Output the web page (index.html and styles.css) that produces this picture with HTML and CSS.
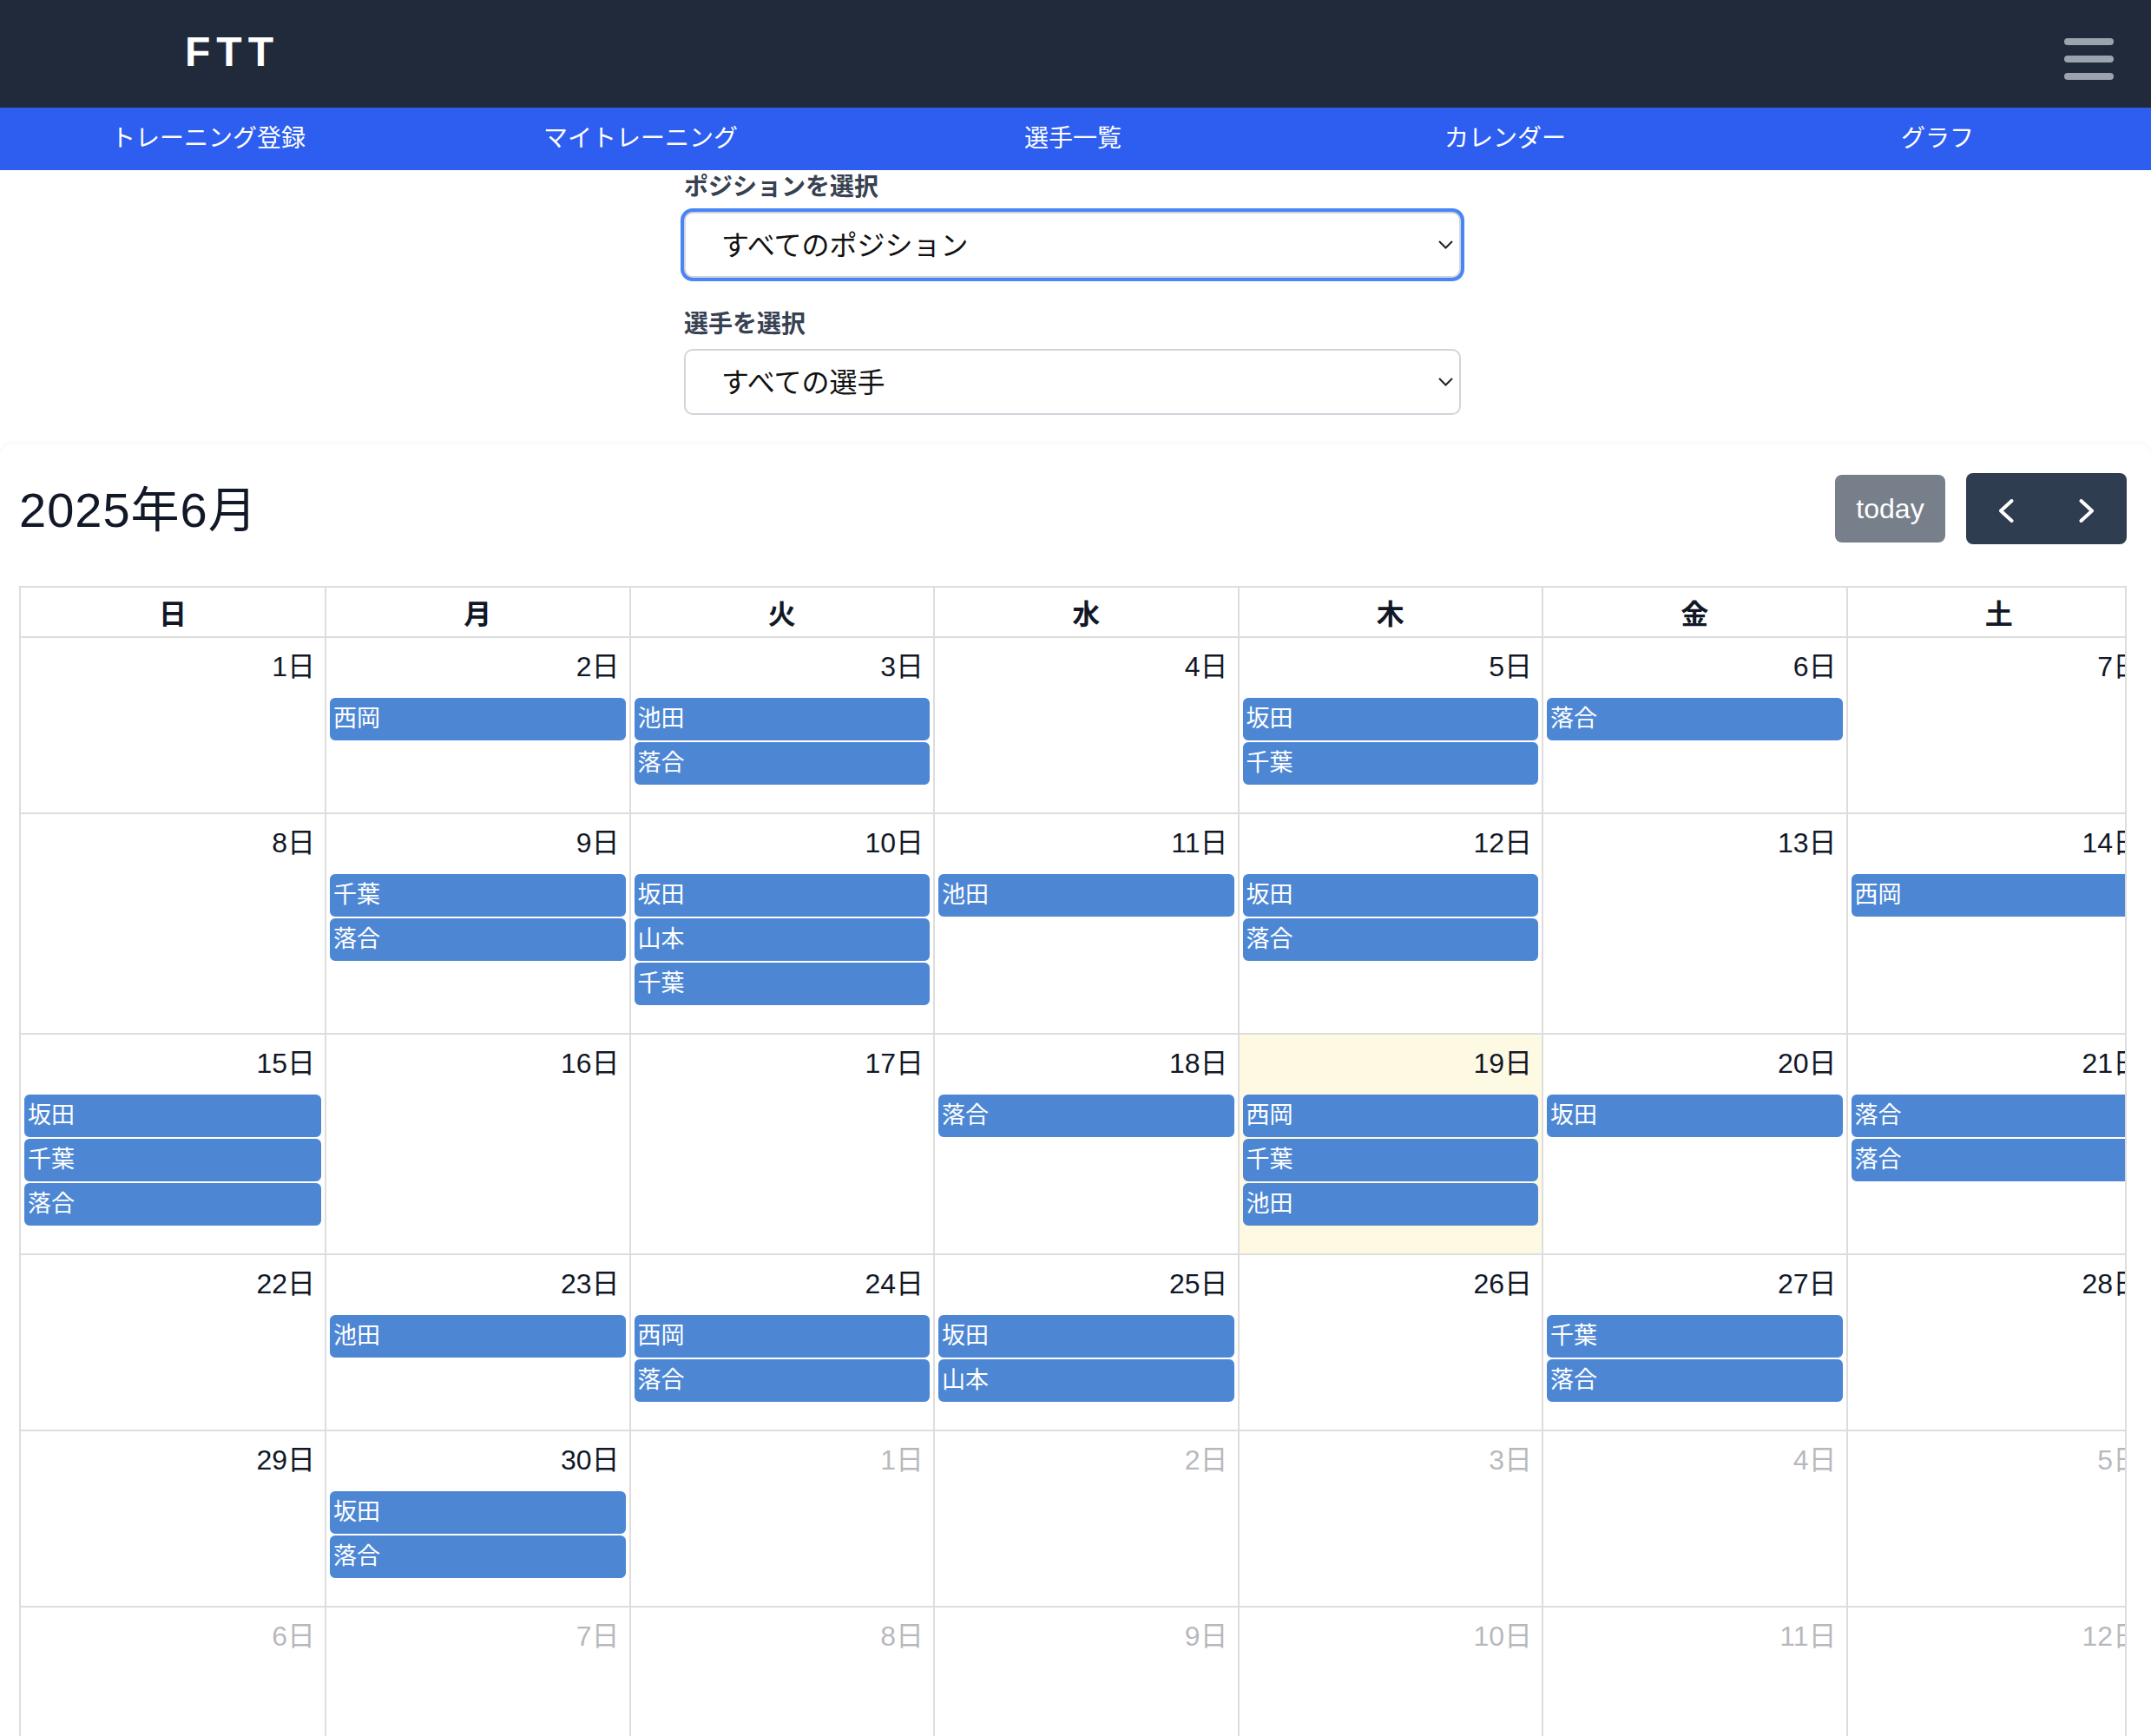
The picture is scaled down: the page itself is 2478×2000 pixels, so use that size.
FILE: index.html
```html
<!DOCTYPE html>
<html lang="ja">
<head>
<meta charset="utf-8">
<title>FTT カレンダー</title>
<link rel="stylesheet" href="styles.css">
</head>
<body>
<header class="topbar">
  <div class="logo">FTT</div>
  <button class="burger" aria-label="メニュー"><span></span><span></span><span></span></button>
</header>
<nav class="mainnav">
  <a class="navlink">トレーニング登録</a>
  <a class="navlink">マイトレーニング</a>
  <a class="navlink">選手一覧</a>
  <a class="navlink">カレンダー</a>
  <a class="navlink">グラフ</a>
</nav>

<section class="filters">
  <label class="flabel">ポジションを選択</label>
  <div class="selwrap focused">
    <select class="sel"><option>すべてのポジション</option></select>
    <svg class="chev" viewBox="0 0 17 10"><polyline points="1,1 8.5,8.5 16,1"/></svg>
  </div>
  <label class="flabel">選手を選択</label>
  <div class="selwrap">
    <select class="sel"><option>すべての選手</option></select>
    <svg class="chev" viewBox="0 0 17 10"><polyline points="1,1 8.5,8.5 16,1"/></svg>
  </div>
</section>

<section class="calcard">
  <div class="toolbar">
    <h2 class="title">2025年6月</h2>
    <div class="btns">
      <button class="btn today">today</button>
      <div class="btngroup">
        <button class="btn navbtn" aria-label="prev"><svg class="arrow" viewBox="0 0 17 27"><polyline points="14.5,2 2,13.5 14.5,25"/></svg></button>
        <button class="btn navbtn" aria-label="next"><svg class="arrow" viewBox="0 0 17 27"><polyline points="2.5,2 15,13.5 2.5,25"/></svg></button>
      </div>
    </div>
  </div>

  <div class="grid">
    <div class="row">
      <div class="hcell">日</div><div class="hcell">月</div><div class="hcell">火</div><div class="hcell">水</div><div class="hcell">木</div><div class="hcell">金</div><div class="hcell">土</div>
    </div>

    <div class="row">
      <div class="day"><div class="num">1日</div></div>
      <div class="day"><div class="num">2日</div><div class="events"><div class="ev">西岡</div></div></div>
      <div class="day"><div class="num">3日</div><div class="events"><div class="ev">池田</div><div class="ev">落合</div></div></div>
      <div class="day"><div class="num">4日</div></div>
      <div class="day"><div class="num">5日</div><div class="events"><div class="ev">坂田</div><div class="ev">千葉</div></div></div>
      <div class="day"><div class="num">6日</div><div class="events"><div class="ev">落合</div></div></div>
      <div class="day"><div class="num">7日</div></div>
    </div>

    <div class="row">
      <div class="day"><div class="num">8日</div></div>
      <div class="day"><div class="num">9日</div><div class="events"><div class="ev">千葉</div><div class="ev">落合</div></div></div>
      <div class="day"><div class="num">10日</div><div class="events"><div class="ev">坂田</div><div class="ev">山本</div><div class="ev">千葉</div></div></div>
      <div class="day"><div class="num">11日</div><div class="events"><div class="ev">池田</div></div></div>
      <div class="day"><div class="num">12日</div><div class="events"><div class="ev">坂田</div><div class="ev">落合</div></div></div>
      <div class="day"><div class="num">13日</div></div>
      <div class="day"><div class="num">14日</div><div class="events"><div class="ev">西岡</div></div></div>
    </div>

    <div class="row">
      <div class="day"><div class="num">15日</div><div class="events"><div class="ev">坂田</div><div class="ev">千葉</div><div class="ev">落合</div></div></div>
      <div class="day"><div class="num">16日</div></div>
      <div class="day"><div class="num">17日</div></div>
      <div class="day"><div class="num">18日</div><div class="events"><div class="ev">落合</div></div></div>
      <div class="day today-cell"><div class="num">19日</div><div class="events"><div class="ev">西岡</div><div class="ev">千葉</div><div class="ev">池田</div></div></div>
      <div class="day"><div class="num">20日</div><div class="events"><div class="ev">坂田</div></div></div>
      <div class="day"><div class="num">21日</div><div class="events"><div class="ev">落合</div><div class="ev">落合</div></div></div>
    </div>

    <div class="row">
      <div class="day"><div class="num">22日</div></div>
      <div class="day"><div class="num">23日</div><div class="events"><div class="ev">池田</div></div></div>
      <div class="day"><div class="num">24日</div><div class="events"><div class="ev">西岡</div><div class="ev">落合</div></div></div>
      <div class="day"><div class="num">25日</div><div class="events"><div class="ev">坂田</div><div class="ev">山本</div></div></div>
      <div class="day"><div class="num">26日</div></div>
      <div class="day"><div class="num">27日</div><div class="events"><div class="ev">千葉</div><div class="ev">落合</div></div></div>
      <div class="day"><div class="num">28日</div></div>
    </div>

    <div class="row">
      <div class="day"><div class="num">29日</div></div>
      <div class="day"><div class="num">30日</div><div class="events"><div class="ev">坂田</div><div class="ev">落合</div></div></div>
      <div class="day other"><div class="num">1日</div></div>
      <div class="day other"><div class="num">2日</div></div>
      <div class="day other"><div class="num">3日</div></div>
      <div class="day other"><div class="num">4日</div></div>
      <div class="day other"><div class="num">5日</div></div>
    </div>

    <div class="row">
      <div class="day other"><div class="num">6日</div></div>
      <div class="day other"><div class="num">7日</div></div>
      <div class="day other"><div class="num">8日</div></div>
      <div class="day other"><div class="num">9日</div></div>
      <div class="day other"><div class="num">10日</div></div>
      <div class="day other"><div class="num">11日</div></div>
      <div class="day other"><div class="num">12日</div></div>
    </div>
  </div>
</section>
</body>
</html>
```

FILE: styles.css
```css
* {
  box-sizing: border-box;
  margin: 0;
  padding: 0;
}

html, body {
  background: #ffffff;
}

body {
  width: 2478px;
  overflow: hidden;
  font-family: "Liberation Sans", "Noto Sans CJK JP", sans-serif;
  color: #111827;
}

/* ---------- top bar ---------- */
.topbar {
  height: 124px;
  background: #202a3a;
  display: flex;
  align-items: flex-start;
  justify-content: space-between;
  padding: 0 43px 0 213px;
}

.logo {
  margin-top: 32px;
  color: #ffffff;
  font-weight: 700;
  font-size: 48px;
  line-height: 56px;
  letter-spacing: 7px;
}

.burger {
  margin-top: 44px;
  width: 57px;
  display: flex;
  flex-direction: column;
  gap: 12px;
  background: none;
  border: 0;
}

.burger span {
  display: block;
  height: 8px;
  border-radius: 4px;
  background: #9ca3af;
}

/* ---------- main nav ---------- */
.mainnav {
  height: 72px;
  background: #2d5ef0;
  display: flex;
  margin: 0 -3px 0 -9px;
}

.navlink {
  flex: 1;
  text-align: center;
  color: #ffffff;
  font-size: 28px;
  line-height: 72px;
}

/* ---------- filters ---------- */
.filters {
  width: 895px;
  margin-left: 788px;
  padding-bottom: 34px;
}

.flabel {
  display: block;
  font-size: 28px;
  line-height: 40px;
  font-weight: 700;
  color: #374151;
  margin-bottom: 8px;
}

.selwrap {
  position: relative;
  height: 76px;
  border: 2px solid #d1d5db;
  border-radius: 10px;
  background: #ffffff;
}

.selwrap + .flabel {
  margin-top: 34px;
}

.selwrap.focused {
  box-shadow: 0 0 0 4px #4a85f6;
}

.sel {
  -webkit-appearance: none;
  appearance: none;
  width: 100%;
  height: 100%;
  border: 0;
  outline: none;
  background: transparent;
  font-family: "Liberation Sans", "Noto Sans CJK JP", sans-serif;
  font-size: 32px;
  color: #111111;
  padding-left: 41px;
  padding-top: 2px;
}

.chev {
  position: absolute;
  right: 7px;
  top: 50%;
  width: 17px;
  height: 10px;
  transform: translateY(-50%);
  fill: none;
  stroke: #222222;
  stroke-width: 2;
}

/* ---------- calendar card ---------- */
.calcard {
  border-radius: 14px 14px 0 0;
  box-shadow: 0 -2px 5px rgba(0, 0, 0, 0.035);
  padding: 33px 28px 0 22px;
  background: #ffffff;
}

.toolbar {
  display: flex;
  align-items: center;
  justify-content: space-between;
  margin-bottom: 48px;
}

.title {
  font-size: 56px;
  font-weight: 400;
  line-height: 68px;
  letter-spacing: 1px;
  padding-top: 3px;
  color: #111827;
}

.btns {
  display: flex;
  align-items: center;
  gap: 24px;
}

.btn {
  border: 0;
  color: #ffffff;
  font-family: "Liberation Sans", sans-serif;
  font-size: 32px;
}

.today {
  width: 127px;
  height: 78px;
  border-radius: 8px;
  background: #777f8b;
}

.btngroup {
  display: flex;
  width: 185px;
  height: 82px;
  border-radius: 8px;
  background: #2f3d50;
  overflow: hidden;
}

.navbtn {
  flex: 1;
  background: transparent;
  display: flex;
  align-items: center;
  justify-content: center;
  padding-top: 4px;
}

.arrow {
  width: 17px;
  height: 27px;
  fill: none;
  stroke: #ffffff;
  stroke-width: 4;
  stroke-linecap: round;
  stroke-linejoin: round;
}

/* ---------- month grid ---------- */
.grid {
  width: 2428px;
  border: 2px solid #dddddd;
  border-bottom: 0;
  overflow: hidden;
}

.row {
  display: grid;
  grid-template-columns: 352px repeat(6, 350.5px);
}

.hcell {
  height: 58px;
  border-right: 2px solid #dddddd;
  border-bottom: 2px solid #dddddd;
  display: flex;
  align-items: center;
  justify-content: center;
  font-size: 32px;
  font-weight: 700;
  color: #111827;
}

.day {
  min-height: 202px;
  border-right: 2px solid #dddddd;
  border-bottom: 2px solid #dddddd;
  padding-bottom: 32px;
}

.today-cell {
  background: #fef9e3;
}

.num {
  padding: 9px 11px 0 0;
  text-align: right;
  font-size: 32px;
  line-height: 48px;
  color: #111827;
}

.other .num {
  opacity: 0.3;
}

.events {
  margin-top: 12px;
  display: flex;
  flex-direction: column;
  gap: 2px;
}

.ev {
  height: 49px;
  margin: 0 4px;
  border: 2px solid #4d87d4;
  border-radius: 6px;
  background: #4d87d4;
  color: #ffffff;
  font-size: 27px;
  line-height: 45px;
  padding-left: 2px;
  white-space: nowrap;
  overflow: hidden;
}
```
